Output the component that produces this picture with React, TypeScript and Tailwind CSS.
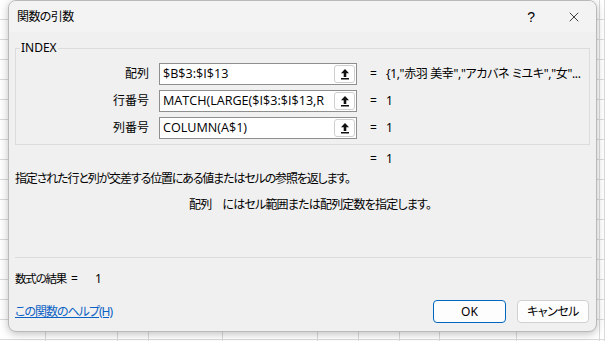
import React from "react";
import { X } from "lucide-react";

function RefIcon() {
  return (
    <svg width="10" height="12" viewBox="0 0 10 12">
      <path d="M5 1 L9 5.2 H6.3 V9 H3.7 V5.2 H1 Z" fill="#111" />
      <rect x="1" y="10" width="8" height="1.5" fill="#111" />
    </svg>
  );
}

function ArgRow({ label, value, result }: { label: string; value: string; result: string }) {
  return (
    <div className="flex items-center h-[22px]">
      <div className="w-[133px] text-right text-[12px] leading-[16px] text-[#000]">{label}</div>
      <div className="ml-[10px] w-[198px] h-[22px] bg-white border border-[#8f8f8f] flex items-center pl-[3px] pr-[1px]">
        <div className="flex-1 min-w-0 overflow-hidden whitespace-nowrap font-['Open_Sans',sans-serif] text-[12.6px] leading-[16px] text-[#000]">{value}</div>
        <div className="w-[21px] h-[18px] rounded-[3px] border border-[#cfcfcf] bg-white flex items-center justify-center shrink-0">
          <RefIcon />
        </div>
      </div>
      <div className="ml-[13px] w-[16px] text-[12px] leading-[16px]">=</div>
      <div className="text-[12px] leading-[16px] whitespace-nowrap tracking-[-0.35px]">{result}</div>
    </div>
  );
}

const cols = [46, 72, 31, 74, 95, 41, 41, 40, 77, 83, 5];

export default function App() {
  return (
    <div className="relative w-[605px] h-[341px] overflow-hidden bg-white font-['Noto_Sans','Noto_Sans_CJK_JP',sans-serif] [font-feature-settings:'palt'] text-[#000]">
      <div className="flex h-full bg-[linear-gradient(to_bottom,transparent_19px,#dadada_19px)] bg-[length:100%_20px]">
        {cols.map((w, i) => (
          <div key={i} className="h-full border-r border-[#dadada]" style={{ width: w }} />
        ))}
      </div>
      <div className="absolute left-[8px] top-0 w-[589px] h-[332px] rounded-[8px] border border-[#b9b9b9] bg-[#f0f0f0] shadow-[0_2px_8px_rgba(0,0,0,0.25)] overflow-hidden flex flex-col">
        <div className="h-[31px] bg-[#f3f3f3] flex items-center pl-[8px] pr-[14px] shrink-0">
          <div className="text-[12px] leading-[16px] tracking-[-0.6px]">関数の引数</div>
          <div className="flex-1" />
          <div className="text-[14px] leading-[16px] mr-[31px] font-['Liberation_Sans',sans-serif]">?</div>
          <X size={16} strokeWidth={1.2} color="#111" />
        </div>
        <fieldset className="mt-[8px] ml-[6px] w-[575px] h-[105px] border border-[#dcdcdc] p-0 m-0">
          <legend className="ml-[4px] px-[1px] text-[12px] leading-[16px]">INDEX</legend>
          <div className="pt-[7px] flex flex-col gap-[5px]">
            <ArgRow label="配列" value="$B$3:$I$13" result={'{1,"赤羽 美幸","アカバネ ミユキ","女"...'} />
            <ArgRow label="行番号" value="MATCH(LARGE($I$3:$I$13,R" result="1" />
            <ArgRow label="列番号" value="COLUMN(A$1)" result="1" />
          </div>
        </fieldset>
        <div className="mt-[6px] pl-[361px] flex text-[12px] leading-[16px]">
          <span className="w-[16px]">=</span>
          <span>1</span>
        </div>
        <div className="mt-[4px] pl-[6px] text-[12px] leading-[16px] tracking-[-1.15px] whitespace-nowrap">
          指定された行と列が交差する位置にある値またはセルの参照を返します。
        </div>
        <div className="mt-[10px] pl-[180px] flex text-[12px] leading-[16px] tracking-[-0.8px] whitespace-nowrap">
          <span>配列</span>
          <span className="ml-[11px]">にはセル範囲または配列定数を指定します。</span>
        </div>
        <div className="mt-[44px] ml-[6px] w-[577px] h-px bg-[#dcdcdc]" />
        <div className="mt-[13px] pl-[6px] flex items-baseline text-[12px] leading-[16px]">
          <span className="text-[11.5px] tracking-[-1.2px]">数式の結果</span>
          <span className="ml-[5px]">=</span>
          <span className="ml-[17px]">1</span>
        </div>
        <div className="mt-[13px] flex items-center h-[23px] pl-[6px] pr-[7px]">
          <a className="text-[12px] leading-[16px] text-[#0b62c4] underline tracking-[-1px]">この関数のヘルプ(H)</a>
          <div className="flex-1" />
          <button className="w-[73px] h-[23px] rounded-[4px] border border-[#0067c0] bg-[#fdfdfd] text-[12px] leading-[16px]">OK</button>
          <button className="ml-[11px] w-[72px] h-[23px] rounded-[4px] border border-[#d0d0d0] bg-[#fdfdfd] text-[12px] leading-[16px] tracking-[-0.5px]">キャンセル</button>
        </div>
      </div>
    </div>
  );
}
